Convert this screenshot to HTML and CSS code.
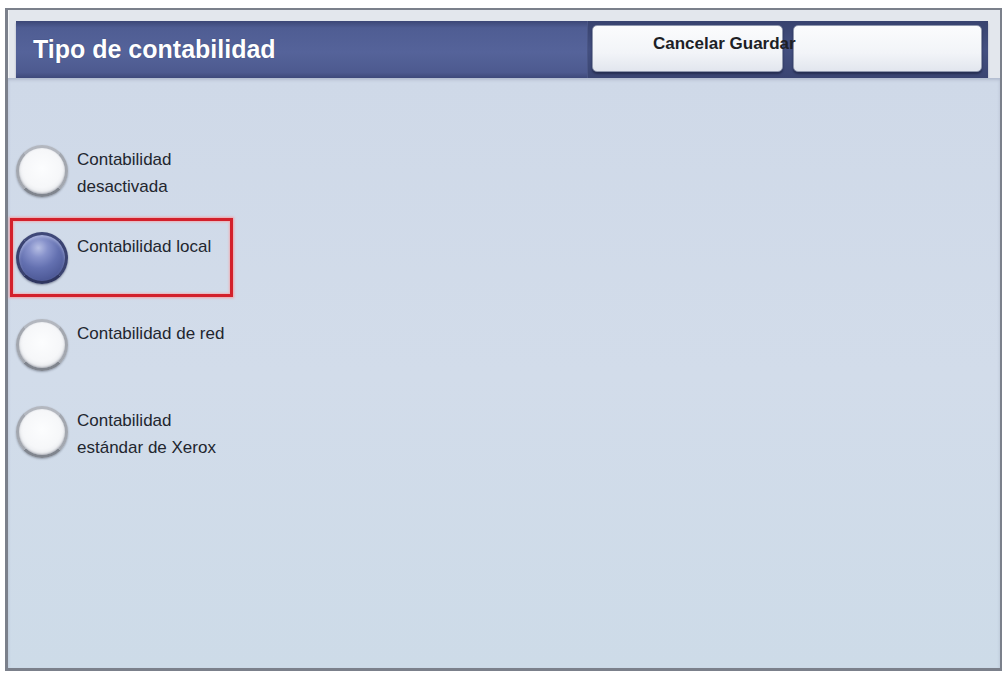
FILE: index.html
```html
<!DOCTYPE html>
<html lang="es">
  <head>
    <meta charset="UTF-8" />
    <meta name="viewport" content="width=device-width, initial-scale=1.0" />
    <title>Tipo de contabilidad</title>

    <link rel="stylesheet" href="styles.css">
  </head>

  <body>
    <div class="panel">
      <div class="top-band">
        <div class="header">
          <h1 class="title">Tipo de contabilidad</h1>
          <div class="tray">
            <div class="btn btn-cancel"><span class="btn-label">Cancelar Guardar</span></div>
            <div class="btn btn-save"></div>
          </div>
        </div>
      </div>

      <div class="content">
        <div class="option">
          <span class="radio"></span>
          <span class="label">Contabilidad<br />desactivada</span>
        </div>
        <div class="option marked">
          <span class="radio checked"></span>
          <span class="label">Contabilidad local</span>
        </div>
        <div class="option">
          <span class="radio"></span>
          <span class="label">Contabilidad de red</span>
        </div>
        <div class="option">
          <span class="radio"></span>
          <span class="label">Contabilidad<br />estándar de Xerox</span>
        </div>
      </div>
    </div>
  </body>
</html>
```

FILE: styles.css
```css
  body {
    margin: 0;
    background: #ffffff;
    font-family: "Liberation Sans", Arial, sans-serif;
  }

  .panel {
    width: 997px;
    height: 663px;
    margin: 8px 0 0 5px;
    box-sizing: border-box;
    border: 2px solid #7b808b;
    border-left-width: 3px;
    border-bottom-width: 3px;
    background: #e3e7ed;
    box-shadow: inset 1px 0 0 #f2f4f7;
    display: flex;
    flex-direction: column;
  }

  .top-band {
    padding: 11px 12px 0 8px;
  }

  .header {
    height: 57px;
    display: flex;
    justify-content: space-between;
    background: linear-gradient(to bottom, #3c4776 0, #4f5d93 12%, #55639a 55%, #4d5a8f 90%, #3e497a 100%);
    box-shadow: 0 2px 2px rgba(60, 70, 100, 0.35);
  }

  .title {
    margin: 0;
    padding-left: 17px;
    font-size: 25px;
    font-weight: bold;
    line-height: 57px;
    color: #ffffff;
    text-shadow: 0 0 1px rgba(20, 30, 70, 0.5);
  }

  .tray {
    display: flex;
    gap: 10px;
    padding: 4px 6px 6px 4px;
    background: linear-gradient(to bottom, #38436f, #434f80 50%, #3a4572);
    border-left: 1px solid #4a5686;
  }

  .btn {
    height: 47px;
    padding: 8px 0 0 60px;
    box-sizing: border-box;
    border: 1px solid #8f97ad;
    border-radius: 5px;
    background: linear-gradient(to bottom, #fbfcfd, #f2f4f8 60%, #e2e6ee);
    box-shadow: 0 2px 2px rgba(10, 15, 40, 0.45);
  }

  .btn-cancel {
    width: 191px;
  }

  .btn-save {
    width: 189px;
  }

  /* the label runs past its own button onto the next one */
  .btn-label {
    position: relative;
    z-index: 1;
    display: block;
    white-space: nowrap;
    font-size: 17px;
    font-weight: bold;
    line-height: 20px;
    color: #1d1f26;
  }

  .content {
    flex: 1;
    padding: 53px 0 0 2px;
    background: linear-gradient(to bottom, #cfd9e8, #d2dcea 50%, #cddbe8);
    box-shadow: inset 0 2px 3px rgba(90, 100, 130, 0.25);
  }

  .option {
    display: flex;
    align-items: flex-start;
    gap: 9px;
    width: 223px;
    height: 79px;
    box-sizing: border-box;
    padding: 11px 3px;
    margin-bottom: 8px;
    border: 3px solid transparent;
  }

  .option.marked {
    border-color: #d3202b;
    box-shadow: 0 0 2px 1px rgba(255, 140, 140, 0.7), inset 0 0 2px 1px rgba(255, 150, 150, 0.6);
  }

  .radio {
    flex: none;
    width: 52px;
    height: 52px;
    box-sizing: border-box;
    border-radius: 50%;
    border: 3px solid;
    border-color: #b3b7bf #a3a7af #80858e;
    background: radial-gradient(circle at 50% 45%, #fcfdfe 0, #f6f7f9 55%, #e4e6ea 80%, #c4c8cf 100%);
    box-shadow: 0 1px 2px rgba(40, 45, 60, 0.35), inset 0 -1px 2px rgba(90, 95, 110, 0.4);
  }

  .radio.checked {
    border-color: #3f4878 #3a4270 #2f3660;
    background: radial-gradient(circle at 42% 28%, #b7bfe4 0, #8792cb 22%, #6370b0 48%, #4f5b99 75%, #414b84 100%);
    box-shadow: 0 1px 2px rgba(30, 35, 60, 0.45), inset 0 2px 3px rgba(220, 225, 250, 0.5);
  }

  .label {
    padding-top: 1px;
    font-size: 17px;
    line-height: 27px;
    color: #22262f;
  }
```
